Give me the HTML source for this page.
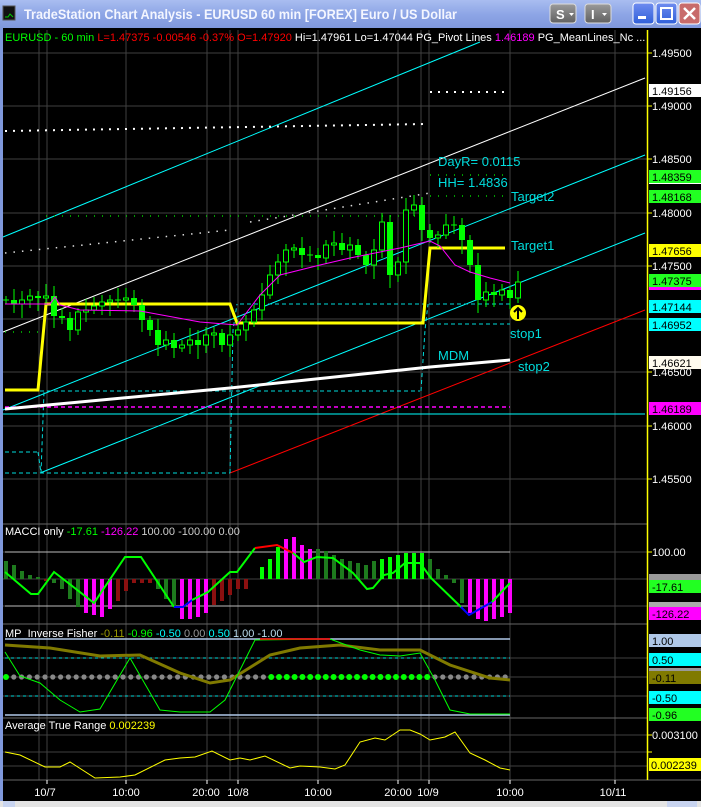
<!DOCTYPE html>
<html><head><meta charset="utf-8"><style>
html,body{margin:0;padding:0;background:#000;width:701px;height:807px;overflow:hidden}
svg{display:block;font-family:"Liberation Sans",sans-serif}
</style></head><body>
<svg id="s" width="701" height="807" viewBox="0 0 701 807" xmlns="http://www.w3.org/2000/svg">
<defs>
<linearGradient id="tb" x1="0" y1="0" x2="0" y2="1"><stop offset="0" stop-color="#a9bdf0"/><stop offset="0.5" stop-color="#8ea6e6"/><stop offset="1" stop-color="#7f98dc"/></linearGradient>
<linearGradient id="bb" x1="0" y1="0" x2="0" y2="1"><stop offset="0" stop-color="#6f8cf0"/><stop offset="1" stop-color="#2f5fd8"/></linearGradient>
<linearGradient id="gb" x1="0" y1="0" x2="0" y2="1"><stop offset="0" stop-color="#9a9a9a"/><stop offset="1" stop-color="#606060"/></linearGradient>
</defs>
<rect width="701" height="807" fill="#000"/>
<rect x="0" y="0" width="701" height="28" fill="url(#tb)"/>
<rect x="3" y="6" width="12" height="14" fill="#111" stroke="#555"/>
<path d="M5 17h3l2-3 3 3" stroke="#0c0" fill="none"/>
<text x="24" y="19" font-size="14" font-weight="bold" fill="#f4f6ff" textLength="433" lengthAdjust="spacingAndGlyphs">TradeStation Chart Analysis - EURUSD 60 min [FOREX] Euro / US Dollar</text>
<rect x="550" y="4" width="26" height="19" rx="3" fill="url(#gb)" stroke="#ddd"/>
<text x="556" y="19" font-size="13" font-weight="bold" fill="#fff">S</text><path d="M569 13h5l-2.5 3z" fill="#fff"/>
<rect x="585" y="4" width="26" height="19" rx="3" fill="url(#gb)" stroke="#ddd"/>
<text x="591" y="19" font-size="13" font-weight="bold" fill="#fff">I</text><path d="M602 13h5l-2.5 3z" fill="#fff"/>
<rect x="633" y="3" width="21" height="21" rx="3" fill="url(#bb)" stroke="#fff"/>
<rect x="638" y="16" width="8" height="3" fill="#fff"/>
<rect x="656" y="3" width="21" height="21" rx="3" fill="url(#bb)" stroke="#fff"/>
<rect x="661" y="8" width="11" height="11" fill="none" stroke="#fff" stroke-width="2"/>
<rect x="679" y="3" width="21" height="21" rx="3" fill="#c86b6b" stroke="#fff"/>
<path d="M684 8l11 11M695 8l-11 11" stroke="#fff" stroke-width="2.5"/>
<rect x="0" y="28" width="3" height="779" fill="#7f98dc"/>
<g stroke="#404040" stroke-width="1">
<path d="M3 53H647M3 106H647M3 159H647M3 213H647M3 266H647M3 319H647M3 372H647M3 426H647M3 479H647"/>
<path d="M3 552H647M3 579H647M3 606H647M3 658H647M3 677H647M3 696H647M3 735H647M3 752H647M3 766H647"/>
<path d="M39 30V780M47 30V780M126 30V780M207 30V780M230 30V780M238 30V780M318 30V780M398 30V780M421 30V780M429 30V780M510 30V780M615 30V780"/>
</g>
<g stroke="#666" stroke-width="1"><path d="M3 524H647M3 624H647M3 718H647M3 780H701"/></g>
<line x1="647.5" y1="30" x2="647.5" y2="780" stroke="#ff0" stroke-width="1.5"/>
<text x="5" y="41" font-size="11"><tspan fill="#0f0">EURUSD - 60 min</tspan> <tspan fill="#f00">L=1.47375  -0.00546  -0.37%  O=1.47920</tspan> <tspan fill="#fff">Hi=1.47961  Lo=1.47044  PG_Pivot Lines</tspan> <tspan fill="#f0f">1.46189</tspan> <tspan fill="#fff">PG_MeanLines_Nc ...</tspan></text>
<line x1="3" y1="237" x2="480" y2="42" stroke="#0ff"/>
<line x1="3" y1="332" x2="645" y2="78" stroke="#fff"/>
<line x1="3" y1="410" x2="645" y2="155" stroke="#0ff"/>
<line x1="40" y1="473" x2="645" y2="233" stroke="#0ff"/>
<line x1="230" y1="473" x2="645" y2="310" stroke="#f00"/>
<path d="M46 216H430" stroke="#0c0" stroke-dasharray="1 7" stroke-width="1.5"/>
<path d="M5 332H40" stroke="#0c0" stroke-dasharray="1 7" stroke-width="1.5"/>
<path d="M430 175H510M430 196H510" stroke="#0c0" stroke-dasharray="1 7" stroke-width="1.5"/>
<path d="M5 253L230 230M250 222L430 193" stroke="#ddd" stroke-dasharray="1.5 7" stroke-width="1.5"/>
<path d="M5 131L425 124M430 92H510" stroke="#fff" stroke-dasharray="2 6" stroke-width="2"/>
<g stroke="#0dd" stroke-dasharray="4 3" fill="none">
<path d="M240 304H510M430 324H510M5 391H420M5 452H38M5 473H230"/>
<path d="M38 452L41 473L44 391M230 473L233 330L237 304M421 391L425 330L428 304"/>
</g>
<path d="M5 407H510" stroke="#f0f" stroke-dasharray="4 3" stroke-width="1.5"/>
<line x1="3" y1="414" x2="645" y2="414" stroke="#0ff"/>
<path d="M5 409L230 388L430 367L510 360" stroke="#fff" stroke-width="3" fill="none"/>
<path d="M5 390H38L46 304H230L237 323H423L430 248H505" stroke="#ff0" stroke-width="3" fill="none"/>
<g id="candles"></g>
<path d="M5 304L50 304L55 297L60 305L80 310L140 311L200 322L237 325L260 295L280 275L320 265L350 258L400 248L430 241L440 246L455 265L470 272L490 278L510 283" stroke="#f0f" fill="none"/>
<g font-size="13" fill="#0dd">
<text x="438" y="166">DayR= 0.0115</text>
<text x="438" y="187">HH= 1.4836</text>
<text x="511" y="201">Target2</text>
<text x="511" y="250">Target1</text>
<text x="510" y="338">stop1</text>
<text x="438" y="360">MDM</text>
<text x="518" y="371">stop2</text>
</g>
<circle cx="518" cy="313" r="8" fill="#ff0"/>
<path d="M518 319V309M514 312L518 308L522 312" stroke="#000" stroke-width="2" fill="none"/>
<g font-size="11" fill="#fff">
<path d="M647 53h5M647 106h5M647 159h5M647 213h5M647 266h5M647 372h5M647 426h5M647 479h5" stroke="#ff0"/>
<text x="652" y="57">1.49500</text><text x="652" y="110">1.49000</text><text x="652" y="163">1.48500</text><text x="652" y="217">1.48000</text><text x="652" y="270">1.47500</text><text x="652" y="376">1.46500</text><text x="652" y="430">1.46000</text><text x="652" y="483">1.45500</text>
</g>
<g font-size="11" fill="#000">
<rect x="649" y="84" width="52" height="13" fill="#fff"/><text x="652" y="95">1.49156</text>
<rect x="649" y="170" width="52" height="13" fill="#2f2"/><text x="652" y="181">1.48359</text>
<rect x="649" y="183" width="52" height="1" fill="#fff"/>
<rect x="649" y="190" width="52" height="13" fill="#2f2"/><text x="652" y="201">1.48168</text>
<rect x="649" y="244" width="52" height="13" fill="#ff0"/><text x="652" y="255">1.47656</text>
<rect x="649" y="274" width="52" height="13" fill="#2f2"/><text x="652" y="285">1.47375</text>
<rect x="649" y="287" width="52" height="3" fill="#f0f"/>
<rect x="649" y="300" width="52" height="13" fill="#0ff"/><text x="652" y="311">1.47144</text>
<rect x="649" y="318" width="52" height="13" fill="#0ff"/><text x="652" y="329">1.46952</text>
<rect x="649" y="356" width="52" height="13" fill="#fffbee"/><text x="652" y="367">1.46621</text>
<rect x="649" y="402" width="52" height="13" fill="#f0f"/><text x="652" y="413">1.46189</text>
</g>
<text x="5" y="535" font-size="11"><tspan fill="#fff">MACCI only</tspan> <tspan fill="#0f0">-17.61</tspan> <tspan fill="#f0f">-126.22</tspan> <tspan fill="#ccc">100.00  -100.00  0.00</tspan></text>
<path d="M5 552H510M5 606H510" stroke="#bbb"/>
<g id="hist"></g>
<path d="M5 572L31 594L38 594L54 572L67 582L94 603L125 557L141 557L174 607" stroke="#0f0" stroke-width="2" fill="none"/>
<path d="M174 607L183 607L192 600" stroke="#00f" stroke-width="2" fill="none"/>
<path d="M192 600L208 592L230 572L237 572L255 548" stroke="#0f0" stroke-width="2" fill="none"/>
<path d="M255 548L277 545L293 553" stroke="#f00" stroke-width="2" fill="none"/>
<path d="M293 553L304 562L317 557L333 558L353 573L367 589L373 588L384 575L393 573L405 563L420 563L431 578L461 607" stroke="#0f0" stroke-width="2" fill="none"/>
<path d="M461 607L469 615L492 602" stroke="#00f" stroke-width="2" fill="none"/>
<path d="M492 602L510 583" stroke="#0f0" stroke-width="2" fill="none"/>
<g font-size="11" fill="#000">
<text x="652" y="556" fill="#fff">100.00</text><path d="M647 552h5" stroke="#ff0"/>
<rect x="649" y="574" width="52" height="6" fill="#999"/>
<rect x="649" y="580" width="52" height="13" fill="#2f2"/><text x="652" y="591">-17.61</text>
<rect x="649" y="602" width="52" height="6" fill="#aaa"/>
<rect x="649" y="607" width="52" height="13" fill="#f0f"/><text x="652" y="618">-126.22</text>
</g>
<text x="5" y="637" font-size="11"><tspan fill="#fff">MP_Inverse Fisher</tspan> <tspan fill="#990">-0.11</tspan> <tspan fill="#0f0">-0.96</tspan> <tspan fill="#0ff">-0.50</tspan> <tspan fill="#999">0.00</tspan> <tspan fill="#0ff">0.50</tspan> <tspan fill="#bde">1.00  -1.00</tspan></text>
<path d="M5 639H510M5 715H510" stroke="#b0c8e8" stroke-width="1.5"/>
<path d="M5 658H510M5 696H510" stroke="#0dd" stroke-dasharray="3 3"/>
<g id="dots"></g>
<path d="M5 645L50 648L100 656L140 655L180 673L210 683L230 680L270 655L300 648L340 645L380 650L420 650L450 665L490 678L510 680" stroke="#807a00" stroke-width="3" fill="none"/>
<path d="M5 652L20 676L40 683L60 700L80 712L100 709L130 658L160 710L180 712L210 712L225 700L255 640L330 639L360 650L380 655L400 656L420 653L435 680L450 710L470 714L510 714" stroke="#0f0" fill="none"/>
<path d="M260 639H330" stroke="#f00" stroke-width="1.5"/>
<g font-size="11" fill="#000">
<rect x="649" y="634" width="52" height="13" fill="#b0c8e8"/><text x="652" y="645">1.00</text>
<rect x="649" y="653" width="52" height="13" fill="#0ff"/><text x="652" y="664">0.50</text>
<rect x="649" y="668" width="52" height="4" fill="#999"/>
<rect x="649" y="671" width="52" height="13" fill="#807a00"/><text x="652" y="682">-0.11</text>
<rect x="649" y="691" width="52" height="13" fill="#0ff"/><text x="652" y="702">-0.50</text>
<rect x="649" y="708" width="52" height="13" fill="#2f2"/><text x="652" y="719">-0.96</text>
</g>
<text x="5" y="729" font-size="11"><tspan fill="#fff">Average True Range</tspan> <tspan fill="#ff0">0.002239</tspan></text>
<path d="M5 752L20 755L45 767L60 767L70 762L95 778L120 777L135 775L165 760L180 758L195 757L212 751L230 760L240 758L250 760L265 756L290 768L300 766L320 767L335 769L345 765L360 742L375 738L385 740L400 730L410 730L420 734L430 740L445 737L455 732L470 753L485 760L500 768L510 770" stroke="#ff0" fill="none"/>
<text x="652" y="739" font-size="11" fill="#fff">0.003100</text><path d="M647 735h5M647 752h5" stroke="#ff0"/>
<rect x="649" y="758" width="52" height="13" fill="#ff0"/><text x="651" y="769" font-size="11" fill="#000">0.002239</text>
<g font-size="11" fill="#fff" text-anchor="middle">
<text x="45" y="796">10/7</text><text x="126" y="796">10:00</text><text x="206" y="796">20:00</text><text x="238" y="796">10/8</text><text x="318" y="796">10:00</text><text x="398" y="796">20:00</text><text x="428" y="796">10/9</text><text x="510" y="796">10:00</text><text x="613" y="796">10/11</text>
</g>
<path d="M47 780v4M126 780v4M207 780v4M238 780v4M318 780v4M398 780v4M429 780v4M510 780v4M615 780v4" stroke="#fff"/>
<rect x="0" y="801" width="701" height="6" fill="#e4e4e4"/>
<rect x="3" y="801" width="12" height="6" fill="#c8d4f0"/>
<rect x="667" y="801" width="30" height="6" fill="#c8d4f0"/>
</svg>
<script>
(function(){
var NS="http://www.w3.org/2000/svg";
function el(p,t,a){var e=document.createElementNS(NS,t);for(var k in a)e.setAttribute(k,a[k]);p.appendChild(e);return e;}
var c=[300,304,300,296,298,296,316,318,330,312,310,306,302,300,300,298,305,320,330,345,340,348,345,340,345,335,333,345,335,330,322,310,295,275,262,250,248,255,255,258,245,243,250,245,255,265,250,222,275,262,210,205,230,238,235,225,225,240,265,300,292,295,290,298,282];
var g=document.getElementById("candles");var o=300;
for(var i=0;i<c.length;i++){var x=6+8*i,cl=c[i],t=Math.min(o,cl),b=Math.max(o,cl);
var h=t-(4+(i*7)%9),l=b+(4+(i*5)%11);
el(g,"line",{x1:x,x2:x,y1:h,y2:l,stroke:"#0f0"});
if(b-t<2){el(g,"line",{x1:x-3,x2:x+3,y1:cl,y2:cl,stroke:"#0f0"});}
else if(cl<o){el(g,"rect",{x:x-2.5,y:t,width:5,height:b-t,fill:"#000",stroke:"#0f0"});}
else{el(g,"rect",{x:x-3,y:t,width:6,height:b-t,fill:"#0f0"});}
o=cl;}
var hs=[[18,"dg"],[14,"dg"],[8,"dg"],[4,"dg"],[2,"dg"],[-2,"dr"],[-4,"dg"],[-10,"dg"],[-20,"dg"],[-28,"dg"],[-34,"m"],[-36,"m"],[-38,"m"],[-30,"m"],[-22,"dr"],[-12,"dr"],[-4,"dr"],[-4,"dr"],[-4,"dr"],[-10,"dg"],[-20,"dg"],[-28,"dg"],[-40,"m"],[-40,"m"],[-38,"m"],[-34,"m"],[-26,"dr"],[-22,"dr"],[-16,"dr"],[-10,"dr"],[-10,"dr"],[0,"g"],[12,"g"],[20,"g"],[32,"g"],[40,"m"],[42,"m"],[34,"m"],[30,"m"],[30,"dg"],[28,"dg"],[24,"dg"],[20,"dg"],[18,"dg"],[16,"dg"],[14,"dg"],[18,"dg"],[20,"g"],[22,"g"],[24,"g"],[26,"g"],[26,"g"],[26,"g"],[20,"dg"],[10,"dg"],[4,"dg"],[-4,"dg"],[-24,"dg"],[-34,"m"],[-40,"m"],[-42,"m"],[-40,"m"],[-38,"m"],[-34,"m"]];
var col={dg:"#1e7a1e",dr:"#8b1010",m:"#ff00ff",g:"#00ff00"};var hg=document.getElementById("hist");
for(var j=0;j<hs.length;j++){var v=hs[j][0];if(!v)continue;var xx=6+8*j;
el(hg,"rect",{x:xx-2,y:v>0?579-v:579,width:4,height:Math.abs(v),fill:col[hs[j][1]]});}
var dg=document.getElementById("dots");
for(var x=6;x<=512;x+=7.8){var gr=(x<9)||(x>266&&x<432);el(dg,"circle",{cx:x,cy:677,r:gr?3:2.6,fill:gr?"#0f0":"#888"});}
})();
</script>
</body></html>
